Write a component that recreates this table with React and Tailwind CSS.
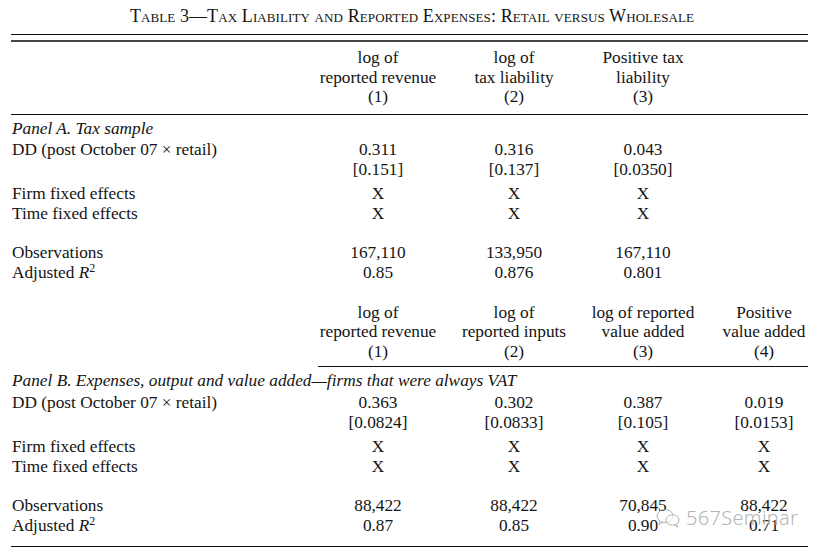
const cols = 'grid grid-cols-[306px_120px_152px_106px_128px] pl-[12px]';

function Row({ label, vals, className = '' }) {
  return (
    <div className={`${cols} h-[20px] leading-[20px] ${className}`}>
      <div className="whitespace-nowrap">{label}</div>
      {vals.map((v, i) => (
        <div key={i} className={`text-center whitespace-nowrap ${i === 3 ? 'pl-[8px]' : ''}`}>{v}</div>
      ))}
    </div>
  );
}

function Header({ lines }) {
  // lines: array of columns, each [l1, l2, l3]
  return (
    <div className={`${cols} leading-[19.5px]`}>
      <div />
      {lines.map((c, i) => (
        <div key={i} className={`text-center whitespace-nowrap ${i === 3 ? 'pl-[8px]' : ''}`}>
          {c.map((t, j) => <div key={j}>{t}</div>)}
        </div>
      ))}
    </div>
  );
}

const R2 = <span>Adjusted <i>R</i><sup className="text-[12px] top-[-6px]">2</sup></span>;

export default function App() {
  return (
    <div className="relative w-[824px] h-[552px] overflow-hidden bg-white text-[#141414] text-[17.3px] font-['Liberation_Serif',serif]">
      <div className="pt-[6px] h-[26px] leading-[20px] text-center text-[18px] [font-variant:small-caps] tracking-[0.1px]">
        Table 3—Tax Liability and Reported Expenses: Retail versus Wholesale
      </div>
      <div className="ml-[11px] w-[797px] mt-[8px] h-px bg-[#111]" />
      <div className="ml-[11px] w-[797px] mt-[5px] h-[2px] bg-[#444]" />

      <div className="mt-[6px]">
        <Header
          lines={[
            ['log of', 'reported revenue', '(1)'],
            ['log of', 'tax liability', '(2)'],
            ['Positive tax', 'liability', '(3)'],
          ]}
        />
      </div>
      <div className="ml-[11px] w-[797px] mt-[7px] h-px bg-[#111]" />

      <div className="mt-[4px]">
        <Row label={<i>Panel A. Tax sample</i>} vals={[]} />
        <Row className="mt-[1px]" label="DD (post October 07 × retail)" vals={['0.311', '0.316', '0.043']} />
        <Row label="" vals={['[0.151]', '[0.137]', '[0.0350]']} />
        <Row className="mt-[4px]" label="Firm fixed effects" vals={['X', 'X', 'X']} />
        <Row label="Time fixed effects" vals={['X', 'X', 'X']} />
        <Row className="mt-[19px]" label="Observations" vals={['167,110', '133,950', '167,110']} />
        <Row label={R2} vals={['0.85', '0.876', '0.801']} />
      </div>

      <div className="mt-[20px]">
        <Header
          lines={[
            ['log of', 'reported revenue', '(1)'],
            ['log of', 'reported inputs', '(2)'],
            ['log of reported', 'value added', '(3)'],
            ['Positive', 'value added', '(4)'],
          ]}
        />
      </div>
      <div className="ml-[318px] w-[490px] mt-[5px] h-px bg-[#111]" />

      <div className="mt-[4px]">
        <Row label={<i>Panel B. Expenses, output and value added—firms that were always VAT</i>} vals={[]} />
        <Row className="mt-[2px]" label="DD (post October 07 × retail)" vals={['0.363', '0.302', '0.387', '0.019']} />
        <Row label="" vals={['[0.0824]', '[0.0833]', '[0.105]', '[0.0153]']} />
        <Row className="mt-[4px]" label="Firm fixed effects" vals={['X', 'X', 'X', 'X']} />
        <Row label="Time fixed effects" vals={['X', 'X', 'X', 'X']} />
        <Row className="mt-[19px]" label="Observations" vals={['88,422', '88,422', '70,845', '88,422']} />
        <Row label={R2} vals={['0.87', '0.85', '0.90', '0.71']} />
      </div>
      <div className="ml-[11px] w-[797px] mt-[10px] h-px bg-[#111]" />

      {/* watermark */}
      <div className="absolute left-[656px] top-[506px] flex items-center gap-[4px] text-[#a0a0a0]/80">
        <svg width="26" height="20" viewBox="0 0 26 20" fill="none" stroke="currentColor" strokeWidth="1">
          <ellipse cx="9" cy="8" rx="8" ry="6.5" />
          <path d="M4 13.5 L3 16.5 L7 14.3" />
          <ellipse cx="16.5" cy="12" rx="6.5" ry="5.2" fill="white" fillOpacity="0.6" />
          <path d="M20.5 16.5 L22 19 L18.5 17.2" />
        </svg>
        <span className="text-[20px] leading-[24px] font-['Noto_Sans',sans-serif] font-light tracking-[0.3px] [text-shadow:0_0_2px_white]">567Seminar</span>
      </div>
    </div>
  );
}
